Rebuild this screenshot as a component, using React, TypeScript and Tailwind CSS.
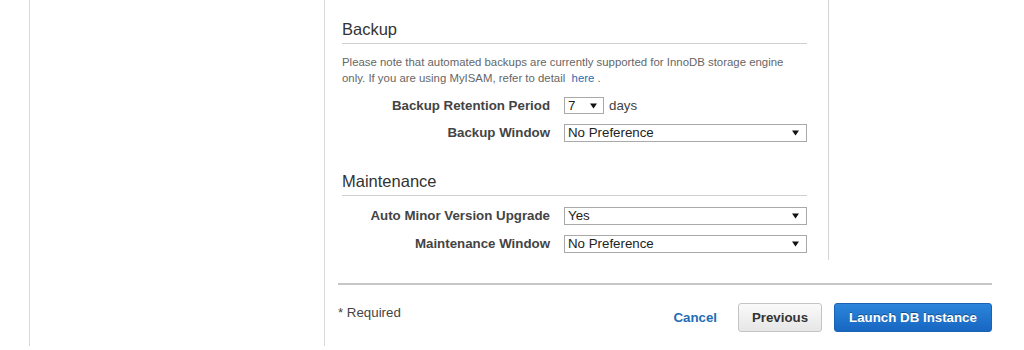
import React from "react";

const Arrow = () => (
  <svg width="7" height="6" viewBox="0 0 7 6" className="shrink-0">
    <path d="M0 0.5 H7 L3.5 5.5 Z" fill="#111" />
  </svg>
);

function Select({ value, wide = true }: { value: string; wide?: boolean }) {
  return (
    <div
      className={
        wide
          ? "flex h-[18px] w-[243px] items-center justify-between border border-[#a9a9a9] bg-white pl-[3px] pr-[7px] text-[13.3px] leading-none text-[#222]"
          : "flex h-[17px] w-[40px] items-center justify-between border border-[#a9a9a9] bg-white pl-[3px] pr-[6px] text-[13.3px] leading-none text-[#222]"
      }
    >
      <span>{value}</span>
      <Arrow />
    </div>
  );
}

function Row({ label, children }: { label: string; children: React.ReactNode }) {
  return (
    <div className="flex h-[19px] items-center gap-[14px]">
      <div className="w-[208px] text-right text-[13.3px] font-bold text-[#444]">{label}</div>
      {children}
    </div>
  );
}

export default function App() {
  return (
    <div
      className="flex h-[350px] w-[1024px] bg-white"
      style={{ fontFamily: '"Liberation Sans", Arial, sans-serif' }}
    >
      <div className="w-[29px] shrink-0" />
      <div className="h-[346px] w-[296px] shrink-0 border-x border-[#d9d9d9]" />
      <div className="flex w-[699px] flex-col pl-[13px] pr-[32px]">
        <div className="flex">
          <div className="w-[491px] border-r border-[#d4d4d4] pb-[7px] pl-[4px] pr-[21px] pt-[19px]">
            <h2 className="border-b border-[#cfcfcf] pb-[4px] text-[16.5px] leading-[20px] text-[#333]">
              Backup
            </h2>
            <p className="mt-[10px] whitespace-nowrap text-[11.4px] leading-[16px] text-[#666]">
              Please note that automated backups are currently supported for InnoDB storage engine
              <br />
              only. If you are using MyISAM, refer to detail&nbsp;&nbsp;
              <span className="text-[#1f6db5]">here</span>&nbsp;.
            </p>
            <div className="mt-[10px] flex flex-col gap-[8px]">
              <Row label="Backup Retention Period">
                <div className="flex items-center gap-[5px]">
                  <Select value="7" wide={false} />
                  <span className="text-[13.3px] text-[#444]">days</span>
                </div>
              </Row>
              <Row label="Backup Window">
                <Select value="No Preference" />
              </Row>
            </div>
            <h2 className="mt-[29px] border-b border-[#cfcfcf] pb-[4px] text-[16.5px] leading-[20px] text-[#333]">
              Maintenance
            </h2>
            <div className="mt-[10px] flex flex-col gap-[9px]">
              <Row label="Auto Minor Version Upgrade">
                <Select value="Yes" />
              </Row>
              <Row label="Maintenance Window">
                <Select value="No Preference" />
              </Row>
            </div>
          </div>
        </div>
        <div className="mt-[23px] h-[2px] w-[654px] bg-[#c6c6c6]" />
        <div className="mt-[18px] flex w-[654px] items-start justify-between">
          <div className="text-[13.3px] text-[#444]">* Required</div>
          <div className="flex items-center">
            <span className="text-[13.3px] font-bold text-[#1f6db5]">Cancel</span>
            <div className="ml-[21px] flex h-[29px] w-[84px] items-center justify-center rounded-[3px] border border-[#c4c4c4] bg-gradient-to-b from-[#fafafa] to-[#e6e6e6] text-[13.3px] font-bold text-[#333]">
              Previous
            </div>
            <div className="ml-[12px] flex h-[29px] w-[158px] items-center justify-center rounded-[3px] border border-[#1a62b4] bg-gradient-to-b from-[#2c86da] to-[#1766c2] text-[13.3px] font-bold text-white [text-shadow:0_-1px_0_rgba(0,0,0,0.35)]">
              Launch DB Instance
            </div>
          </div>
        </div>
      </div>
    </div>
  );
}
